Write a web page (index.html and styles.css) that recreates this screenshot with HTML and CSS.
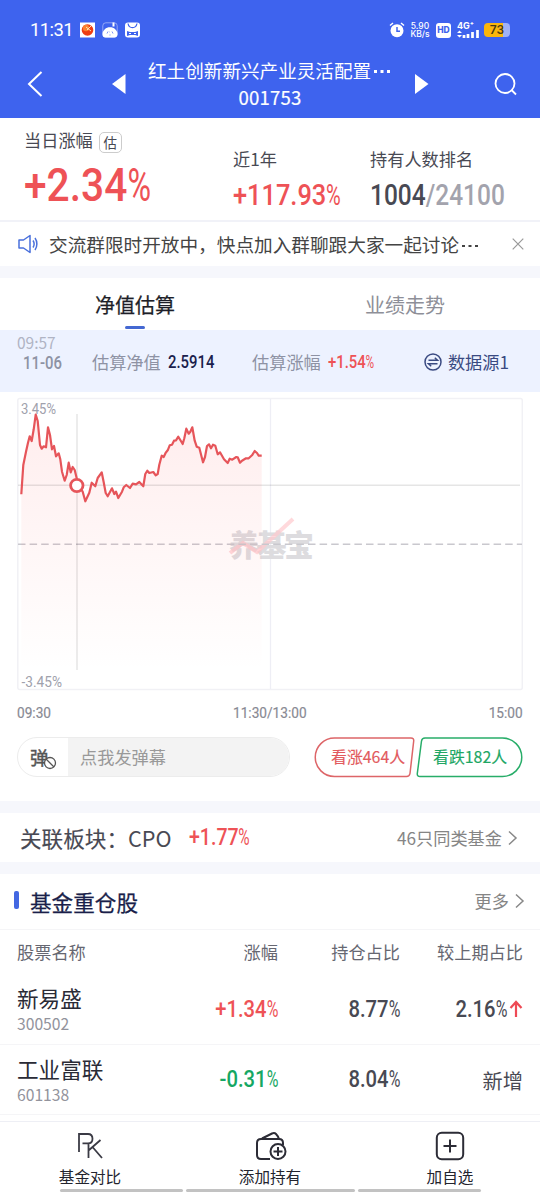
FILE: index.html
```html
<!DOCTYPE html>
<html lang="zh-CN">
<head>
    <meta charset="UTF-8" />
    <meta name="viewport" content="width=device-width, initial-scale=1.0" />
    <title>红土创新新兴产业灵活配置 001753</title>
    <link rel="stylesheet" href="styles.css">
</head>
<body>
    <header>
        <div class="status">
            <span class="clock">11:31</span>
            <svg class="apps" width="61" height="16" viewBox="0 0 61 16">
                <rect x="0" y="0.5" width="15" height="15" fill="#fff" />
                <circle cx="7.5" cy="8" r="5.8" fill="#ee3d12" />
                <circle cx="6" cy="6" r="3.2" fill="#fa8130" />
                <path d="M6 5l5 4M7 8l4-4" stroke="#ffe0b0" stroke-width="1" />
                <rect x="22.8" y="0.8" width="14.4" height="14.4" rx="3" fill="none" stroke="#a9b8f8" stroke-width="0.8" />
                <path d="M22.5 12c0-3 1.500-3.500 2.500-5 2-2.500 8-2.500 10 0 1 1.500 2.500 2 2.500 5 0 3-2 3.500-4 3.500h-7c-2 0-4 0-4-3.500z" fill="#fff" />
                <path d="M32.5 0.5h2v4h-2z" fill="#fff" />
                <path d="M27 11.5l1-2M32 9.5l1 2M29.5 13h1M29 10h.5" stroke="#7f95f5" stroke-width="1" />
                <rect x="45" y="0.5" width="15" height="15" rx="3" fill="#fff" />
                <path d="M48 1.5c1 5.5 8 5.5 9 0" fill="none" stroke="#3e63ee" stroke-width="1.2" />
                <path d="M47 9l3 1h5l3-1v5l-3-1h-5l-3 1z" fill="#3e63ee" />
                <path d="M49 11.5h2M54 11.5h2" stroke="#fff" stroke-width="1" />
            </svg>
            <div class="signals">
                <svg width="16" height="16" viewBox="0 0 16 16">
                    <circle cx="8" cy="8.7" r="6.5" fill="#fff" />
                    <path d="M1 3.5L4 1M12 1l3 2.5" stroke="#fff" stroke-width="1.5" />
                    <path d="M8 5v4.2h3" fill="none" stroke="#3e63ee" stroke-width="1.5" />
                </svg>
                <div class="speed">5.90<br>KB/s</div>
                <span class="hd">HD</span>
                <div class="net">
                    <span>4G⁺</span>
                    <svg width="22" height="8" viewBox="0 0 22 8">
                        <path d="M0 3l2.5-2.5L5 3zM0 5l2.5 2.5L5 5z" fill="#fff" />
                        <path d="M7 5v3M11 4v4M15.5 2v6M20.5 0v8" stroke="#fff" stroke-width="2.7" />
                    </svg>
                </div>
                <span class="battery">73</span>
            </div>
        </div>
        <div class="nav">
            <svg width="18" height="28" viewBox="0 0 18 28"><path d="M15.5 2L3 14l12.5 12" fill="none" stroke="#fff" stroke-width="2" /></svg>
            <svg class="prev" width="14" height="20" viewBox="0 0 14 20"><path d="M13.5 0v20L0 10z" fill="#fff" /></svg>
            <div class="title">
                <div>红土创新新兴产业灵活配置<b class="dots"></b></div>
                <div class="code">001753</div>
            </div>
            <svg class="next" width="14" height="20" viewBox="0 0 14 20"><path d="M0 0v20l13.5-10z" fill="#fff" /></svg>
            <svg width="23" height="23" viewBox="0 0 23 23">
                <circle cx="11" cy="10.5" r="9.5" fill="none" stroke="#fff" stroke-width="1.8" />
                <path d="M17.5 17l4.5 4.5" stroke="#fff" stroke-width="1.8" />
            </svg>
        </div>
    </header>

    <section class="summary">
        <div class="day">
            <div class="label">当日涨幅<span class="tag">估</span></div>
            <div class="num up big">+2.34<i>%</i></div>
        </div>
        <div class="year">
            <div class="label">近1年</div>
            <div class="num up mid">+117.93<i>%</i></div>
        </div>
        <div class="rank">
            <div class="label">持有人数排名</div>
            <div class="num mid">1004<span class="all">/24100</span></div>
        </div>
    </section>

    <section class="notice">
        <svg width="20" height="20" viewBox="0 0 20 20" fill="none" stroke="#4a70dc" stroke-width="1.5" stroke-linejoin="round">
            <path d="M1 6h4.5L12 1.5v17L5.5 14H1zM15 6.5c1.3 2 1.3 5 0 7M17 4c2.5 3.5 2.5 8.5 0 12" />
        </svg>
        <p>交流群限时开放中，快点加入群聊跟大家一起讨论<b class="dots"></b></p>
        <svg width="12" height="12" viewBox="0 0 12 12"><path d="M.7.7l10.6 10.6M11.3.7L.7 11.3" stroke="#999" stroke-width="1.2" /></svg>
    </section>

    <nav class="tabs">
        <div class="tab active">净值估算</div>
        <div class="tab">业绩走势</div>
    </nav>

    <section class="info">
        <div class="time">09:57</div>
        <div class="info-row">
            <span class="num date">11-06</span>
            <span class="info-label">估算净值</span>
            <span class="num value">2.5914</span>
            <span class="info-label">估算涨幅</span>
            <span class="num up">+1.54<i>%</i></span>
            <span class="source">
                <svg width="18" height="18" viewBox="0 0 18 18" fill="none" stroke="#3a4a82" stroke-width="1.5">
                    <circle cx="9" cy="9" r="8" />
                    <path d="M4.5 7.2h9L10.8 4.8M13.5 10.8h-9l2.7 2.4" />
                </svg>
                数据源1
            </span>
        </div>
    </section>

    <section class="chart">
        <svg width="540" height="309" viewBox="0 0 540 309">
            <defs>
                <linearGradient id="area" x1="0" y1="0" x2="0" y2="1">
                    <stop offset="0" stop-color="#ff4d4f" stop-opacity="0.1" />
                    <stop offset="1" stop-color="#ff4d4f" stop-opacity="0" />
                </linearGradient>
            </defs>
            <rect x="17.8" y="6.5" width="504.5" height="291" rx="2" fill="none" stroke="#f1f1f5" stroke-width="1.5" />
            <path d="M270.5 7v290" stroke="#eeeef5" stroke-width="1.3" />
            <!-- 水印 -->
            <text class="watermark" x="229" y="164" textLength="85">养基宝</text>
            <path d="M230 161l13-10 14 9 36-33" fill="none" stroke="#ffc9cd" stroke-opacity="0.7" stroke-width="4" />
            <path d="M18 152.3h504" stroke="#c9c8ce" stroke-width="1.5" stroke-dasharray="7.5 4.1" />
            <path id="fill" fill="url(#area)" />
            <path d="M77 22v256M18 93.3h502" stroke="#000" stroke-opacity="0.1" stroke-width="1.5" />
            <path id="line" fill="none" stroke="#e6555a" stroke-width="2.2" stroke-linejoin="round" />
            <circle cx="76.8" cy="93.5" r="6.2" fill="#fff" stroke="#e6555a" stroke-width="2.8" />
            <text class="axis" x="21" y="22" textLength="35" lengthAdjust="spacingAndGlyphs">3.45%</text>
            <text class="axis" x="21.5" y="295" textLength="40.5" lengthAdjust="spacingAndGlyphs">-3.45%</text>
        </svg>
        <div class="hours">
            <span class="num">09:30</span>
            <span class="num">11:30/13:00</span>
            <span class="num">15:00</span>
        </div>
    </section>

    <section class="chat">
        <div class="danmu">
            <div class="toggle">
                弹
                <svg class="ban" width="14" height="14" viewBox="0 0 14 14"><circle cx="7" cy="7" r="5.5" fill="#fff" stroke="#555" stroke-width="1.3" /><path d="M3 3l8 8" stroke="#555" stroke-width="1.3" /></svg>
            </div>
            <div class="field">点我发弹幕</div>
        </div>
        <div class="vote bull">
            <svg width="101" height="41" viewBox="0 0 101 41"><path d="M20.5 1H97q3 0 2.7 3L96 36.5q-.5 3-3.5 3H20.5a19.25 19.25 0 0 1 0-38.5z" fill="none" stroke="#dd6568" stroke-width="1.5" /></svg>
            <span>看涨464人</span>
        </div>
        <div class="vote bear">
            <svg width="107" height="41" viewBox="0 0 107 41"><path d="M86.5 1H9q-3 0-3.5 3L1.3 36.5q-.3 3 2.7 3h82.5a19.25 19.25 0 0 0 0-38.5z" fill="none" stroke="#28ad69" stroke-width="1.5" /></svg>
            <span>看跌182人</span>
        </div>
    </section>

    <section class="sector">
        <span class="sector-name">关联板块：</span><span>CPO</span>
        <span class="num up">+1.77<i>%</i></span>
        <span class="more">46只同类基金
            <svg width="10" height="16" viewBox="0 0 10 16"><path d="M1 1.5L8 8l-7 6.5" fill="none" stroke="#888" stroke-width="1.5" /></svg>
        </span>
    </section>

    <section class="holdings">
        <div class="holdings-head">
            <h2>基金重仓股</h2>
            <span class="more">更多
                <svg width="10" height="16" viewBox="0 0 10 16"><path d="M1 1.5L8 8l-7 6.5" fill="none" stroke="#888" stroke-width="1.5" /></svg>
            </span>
        </div>
        <div class="row row-head">
            <span>股票名称</span><span>涨幅</span><span>持仓占比</span><span>较上期占比</span>
        </div>
        <div class="row">
            <div class="stock">新易盛<small>300502</small></div>
            <span class="num up">+1.34<i>%</i></span>
            <span class="num">8.77<i>%</i></span>
            <span class="change">
                <span class="num">2.16<i>%</i></span>
                <svg width="14" height="18" viewBox="0 0 14 18"><path d="M7 17V2M1.5 8L7 2l5.5 6" fill="none" stroke="#ee4a55" stroke-width="2.2" /></svg>
            </span>
        </div>
        <div class="row">
            <div class="stock">工业富联<small>601138</small></div>
            <span class="num down">-0.31<i>%</i></span>
            <span class="num">8.04<i>%</i></span>
            <span class="fresh">新增</span>
        </div>
    </section>

    <footer>
        <div class="action">
            <svg width="30" height="30" viewBox="0 0 30 30" fill="none" stroke="#3a3a44" stroke-width="1.8">
                <path d="M4 21V3h9q4.5 0 4.500 4.700T13 12.400H7.500M13.500 12.400V27M25.500 9L13.500 19.500M17.500 16L27 27" />
            </svg>
            基金对比
        </div>
        <div class="action">
            <svg width="34" height="30" viewBox="0 0 34 30" fill="none" stroke="#2c2c36" stroke-width="2">
                <path d="M17 28H8q-4 0-4-4V12q0-4 4-4h18q4 0 4 4v2" />
                <path d="M9 7.5l10-5q2.5-1 4 .5 2 2 3 5" />
                <circle cx="25" cy="20.5" r="7.5" fill="#fff" />
                <path d="M25 16v9M20.5 20.5h9" />
            </svg>
            添加持有
        </div>
        <div class="action">
            <svg width="30" height="30" viewBox="0 0 30 30" fill="none" stroke="#2c2c36" stroke-width="2">
                <rect x="1.8" y="1.8" width="26.4" height="26.4" rx="5" />
                <path d="M15 8.5v13M8.5 15h13" />
            </svg>
            加自选
        </div>
        <div class="bars"><span></span><span></span><span></span></div>
    </footer>

    <script>
        // 估算走势点位 [x, y]
        const puntos = [
            [21.3,102.3],[23.3,73],[26,59.7],[28,50.7],[29.7,44.3],[31.7,49],[33.7,37.3],[35.7,22.7],[37.7,29],[40,53],
            [41.7,56.7],[43.7,54.3],[46,55.3],[48,35.3],[50,43],[52,57.3],[54,54],[56,64.3],[58.7,61.3],[60.3,67.3],
            [62,79.7],[64.7,88.7],[66.7,83],[68.7,70.7],[70.7,80.3],[72.7,75],[74.7,78],[76.7,86.3],[79.3,95],[82.7,99.7],
            [85.3,109.3],[89.3,100.7],[91.7,90.7],[95.3,94.3],[97.7,86],[101.7,80.3],[103.7,90.3],[105.7,101],[107.7,104.3],[112,96.3],
            [114.3,102],[116,99.7],[118.3,106],[122,99.7],[123.7,95.3],[126.3,93],[130,96],[132.7,91.7],[136,92.3],[139.3,90],
            [143.3,94.3],[145.3,82],[147.3,78.7],[149.3,81],[153.3,80],[155.7,83.3],[157.7,82],[159.3,72.7],[161.7,63.7],[163.7,65],
            [165.7,60.7],[167.7,58.3],[169.7,53.3],[172,52.7],[174,48.7],[176,48.3],[178.3,44.7],[180.3,48],[182.7,52],[184.3,46.3],
            [186.3,36.7],[188.7,41.7],[190.3,39.7],[192.3,35.3],[194.7,48.7],[196.7,54.7],[199.3,55.7],[203,70.3],[205,65],[207,54],
            [209,52.3],[211,56.3],[213,52.7],[215.3,53.7],[217.7,62.3],[220,60.3],[224,67.3],[227.7,71],[229.7,66.7],[232.3,67.7],
            [236.3,65],[237.7,65.3],[240,70.7],[242,68.7],[246,66.3],[248.7,66.3],[252,63.3],[254.7,59],[257,61],[258.7,63.7],[261.7,63.7]
        ];
        const d = "M" + puntos.map(p => p.join(" ")).join("L");
        document.getElementById("line").setAttribute("d", d);
        document.getElementById("fill").setAttribute("d", d + "V279H21.3Z");
    </script>
</body>
</html>
```
FILE: styles.css
```css
:root {
    --azul: #3e63ee;
    --rojo: #ee5256;
    --verde: #16a763;
    --banda: #f6f7fc;
    --texto: #484953;
}

* {
    box-sizing: border-box;
}

body {
    margin: 0;
    width: 540px;
    height: 1194px;
    overflow: hidden;
    display: flex;
    flex-direction: column;
    font-family: "Noto Sans CJK SC", sans-serif;
    font-size: 17.2px;
    line-height: 24px;
    background: white;
    color: var(--texto);
}

svg {
    display: block;
    flex: none;
}

.num {
    display: inline-block;
    font-family: Roboto, sans-serif;
    font-weight: 500;
    white-space: nowrap;
    transform: scaleX(0.85);
    transform-origin: left;
}

    .num i {
        display: inline-block;
        width: 0.57em;
        font-style: normal;
        font-weight: 400;
        text-align: left;
        transform: scaleX(0.79);
        transform-origin: left;
    }

.up {
    color: var(--rojo);
}

.down {
    color: var(--verde);
}

.dots {
    display: inline-block;
    width: 2.5px;
    height: 2.5px;
    margin: 0 14px 5px 3px;
    background: currentColor;
    box-shadow: 6.5px 0 currentColor, 13px 0 currentColor;
}

/* cabecera */
header {
    height: 118px;
    background: var(--azul);
    color: white;
}

.status {
    display: flex;
    align-items: center;
    height: 52px;
    padding: 8px 30px 0;
}

.clock {
    width: 50px;
    font-family: Roboto, sans-serif;
    font-size: 18.5px;
    letter-spacing: -0.6px;
}

.signals {
    display: flex;
    align-items: center;
    margin-left: auto;
    font-family: Inter, sans-serif;
}

.speed {
    width: 20px;
    margin: 0 6px 0 5px;
    font-size: 8.5px;
    line-height: 8px;
    text-align: center;
    font-weight: 500;
}

.hd {
    width: 15px;
    height: 15px;
    border-radius: 3px;
    background: white;
    color: var(--azul);
    font-size: 8.5px;
    line-height: 15px;
    font-weight: 800;
    text-align: center;
}

.net {
    margin: 0 5px 0 6px;
    font-size: 9px;
    line-height: 8px;
    font-weight: 700;
}

    .net span {
        display: block;
        height: 8px;
    }

.battery {
    width: 26px;
    height: 14px;
    border-radius: 4px;
    background: linear-gradient(90deg, #fbb60c 74%, #9fb1f7 74%);
    color: #4a3a10;
    font-size: 12px;
    line-height: 14px;
    font-weight: 600;
    text-align: center;
}

.nav {
    display: flex;
    align-items: center;
    height: 64px;
    padding: 0 23px 0 26px;
}

.prev {
    margin-left: 68px;
}

.title {
    width: 244px;
    margin: -3px 23px 0 22px;
    font-size: 18.6px;
    line-height: 27px;
    white-space: nowrap;
}

.code {
    text-align: center;
    letter-spacing: 0.2px;
    -webkit-text-stroke: 0.2px;
}

.next {
    margin-right: auto;
}

/* resumen */
.summary {
    display: flex;
    height: 104px;
    padding-left: 24px;
    border-bottom: 2px solid #f1f2f8;
}

.day {
    width: 209px;
    padding-top: 10px;
}

.year {
    width: 137px;
    padding-top: 29px;
}

.rank {
    padding-top: 29px;
}

.tag {
    display: inline-block;
    width: 23px;
    height: 21px;
    margin-left: 6px;
    border: 1.5px solid #ccc;
    border-radius: 5px;
    font-size: 13.5px;
    line-height: 18px;
    text-align: center;
    vertical-align: -1px;
}

.big {
    font-size: 46px;
    line-height: 46px;
    margin-top: 9px;
    transform: scaleX(0.885);
}

.mid {
    font-size: 29.5px;
    line-height: 34px;
    margin-top: 7px;
    transform: scaleX(0.83);
}

    .mid.up {
        transform: scaleX(0.86);
    }

.all {
    color: #a3a3ad;
}

.notice {
    display: flex;
    align-items: center;
    height: 44px;
    padding: 0 16px 0 18px;
    color: #444;
    font-size: 18.65px;
}

    .notice p {
        flex: 1;
        margin: 0 0 0 11px;
        white-space: nowrap;
    }

/* pestañas */
.tabs {
    display: flex;
    height: 64px;
    border-top: 12px solid var(--banda);
}

.tab {
    flex: 1;
    display: flex;
    flex-direction: column;
    align-items: center;
    padding-top: 15px;
    font-size: 20px;
    color: #8e8f98;
}

    .tab.active {
        color: #1d1e28;
        -webkit-text-stroke: 0.25px;
    }

        .tab.active::after {
            content: "";
            width: 20px;
            height: 3px;
            margin-top: 9px;
            border-radius: 2px;
            background: #4468d2;
        }

.info {
    height: 62px;
    padding-left: 17px;
    padding-right: 17px;
    background: #edf2ff;
}

.time {
    height: 19px;
    font-size: 15.5px;
    line-height: 24px;
    color: #b0b4c4;
}

.info-row {
    display: flex;
    align-items: center;
    height: 26px;
    white-space: nowrap;
    color: #8e92a4;
}

    .info-row .num {
        font-size: 17.5px;
    }

.date {
    width: 69px;
    margin: 1px 0 0 6px;
}

.info-label {
    width: 76px;
}

.value {
    width: 84px;
    color: #1b1f4d;
}

.source {
    display: flex;
    align-items: center;
    gap: 6px;
    margin-left: auto;
    padding-right: 14px;
    color: #3a4a82;
}

/* grafica */
.chart {
    height: 338px;
}

.axis {
    font-family: Roboto, sans-serif;
    font-size: 15px;
    fill: #a0a1ac;
}

.watermark {
    font-size: 30px;
    font-weight: 900;
    fill: #dddcdf;
}

.hours {
    display: flex;
    justify-content: space-between;
    padding: 0 17px;
    font-size: 15.5px;
    color: #888993;
}

    .hours .num {
        font-weight: 400;
        transform: scaleX(0.88);
        -webkit-text-stroke: 0.2px;
    }

    .hours .num:nth-child(2) {
        transform-origin: center;
    }

    .hours .num:last-child {
        transform-origin: right;
    }

.chat {
    display: flex;
    height: 71px;
    padding: 7px 17px 0;
}

.danmu {
    display: flex;
    width: 274px;
    height: 40px;
    border: 1px solid #ececec;
    border-radius: 20px;
    overflow: hidden;
    line-height: 38px;
}

.toggle {
    position: relative;
    width: 50px;
    padding-left: 12px;
    font-size: 18.5px;
    color: #555;
    -webkit-text-stroke: 0.4px;
}

.ban {
    position: absolute;
    left: 25px;
    top: 18px;
}

.field {
    flex: 1;
    padding-left: 12px;
    background: #f3f3f3;
    color: #999;
}

.vote {
    position: relative;
    font-size: 15.9px;
    -webkit-text-stroke: 0.15px;
}

    .vote span {
        position: absolute;
        top: 8px;
        left: 17px;
        white-space: nowrap;
    }

.bull {
    margin-left: 24px;
    color: #e2595d;
}

.bear {
    margin-left: 1px;
    color: #20a664;
}

.sector {
    display: flex;
    align-items: center;
    height: 61px;
    border-top: 12px solid var(--banda);
    padding: 1px 22px 0 20px;
    font-size: 21.6px;
}

    .sector .num {
        margin-left: 18px;
        font-size: 23px;
    }

.sector-name {
    -webkit-text-stroke: 0.15px;
}

.more {
    display: flex;
    align-items: center;
    gap: 6px;
    margin-left: auto;
    font-size: 17.2px;
    color: #858585;
}

/* tabla de posiciones */
.holdings {
    flex: 1;
    border-top: 12px solid var(--banda);
}

.holdings-head {
    display: flex;
    align-items: center;
    height: 56px;
    padding: 0 15px 0 14px;
    border-bottom: 1px solid #f5f5f7;
}

    .holdings-head .more {
        margin-top: -2px;
    }

h2 {
    display: flex;
    align-items: center;
    margin: 0;
    font-size: 21.6px;
    font-weight: 400;
    color: #1a1f4a;
    -webkit-text-stroke: 0.25px;
}

    h2::before {
        content: "";
        width: 5px;
        height: 18px;
        margin: -3px 11px 0 0;
        border-radius: 2px;
        background: #4368e2;
    }

.row {
    display: grid;
    grid-template-columns: 139px 122px 122px 123px;
    align-items: center;
    height: 70.5px;
    padding: 0 17px;
    text-align: right;
    border-bottom: 1px solid #f5f5f7;
}

    .row .num {
        font-size: 23.5px;
        transform: scaleX(0.86);
        transform-origin: right;
    }

.row-head {
    height: 44px;
    border: 0;
    color: #666771;
}

.row-head span:first-child,
.stock {
    text-align: left;
}

.stock {
    padding-top: 3px;
    font-size: 21.6px;
    line-height: 28px;
    color: #2a2b36;
}

    .stock small {
        display: block;
        font-size: 15.7px;
        line-height: 24px;
        color: #92939c;
    }

.change {
    display: flex;
    align-items: center;
    justify-content: flex-end;
    gap: 2px;
}

.fresh {
    font-size: 20.2px;
    padding-top: 3px;
}

/* barra inferior */
footer {
    position: relative;
    display: flex;
    justify-content: space-around;
    height: 73px;
    border-top: 1.5px solid #eeeff5;
    background: white;
}

.action {
    display: flex;
    flex-direction: column;
    align-items: center;
    width: 180px;
    padding-top: 9px;
    font-size: 15.6px;
    line-height: 30px;
    color: #23242e;
}

.bars {
    position: absolute;
    left: 60px;
    bottom: 2px;
    display: flex;
    gap: 3px;
}

    .bars span {
        width: 123px;
        height: 3px;
        border-radius: 2px;
        background: #c2c2c2;
    }

    .bars span:nth-child(2) {
        width: 169px;
    }
```
